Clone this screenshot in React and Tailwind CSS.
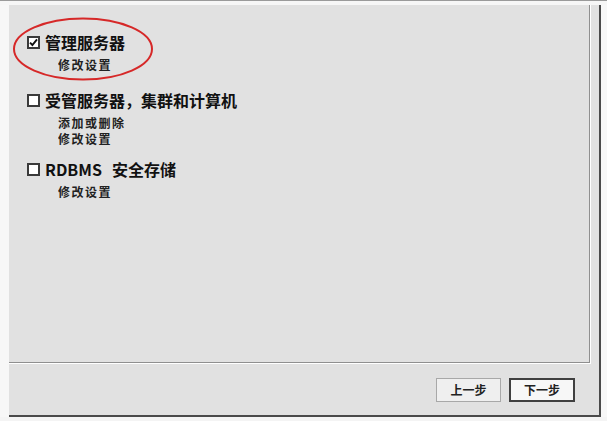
const CheckBox = ({ checked }) => (
  <span className="flex h-[13px] w-[13px] shrink-0 items-center justify-center border-2 border-[#3a3a3a] bg-white">
    {checked && (
      <svg width="9" height="9" viewBox="0 0 9 9">
        <path d="M1 4.6 L3.4 7 L8 1.4" fill="none" stroke="#111" strokeWidth="1.9" />
      </svg>
    )}
  </span>
);

const Option = ({ checked, label, subs, className }) => (
  <div className={className}>
    <div className="flex h-[22px] items-center gap-[5px] pl-[18px]">
      <CheckBox checked={checked} />
      <span className="text-[16px] font-bold leading-[22px] text-[#111]">{label}</span>
    </div>
    <div className="mt-[4px] pl-[49px]">
      {subs.map((s, i) => (
        <div key={i} className="h-[16px] overflow-hidden text-[12px] font-bold leading-[16px] tracking-[1.5px] text-[#222]">
          {s}
        </div>
      ))}
    </div>
  </div>
);

export default function App() {
  return (
    <div
      className="relative flex h-[421px] w-[607px] flex-col bg-white"
      style={{ fontFamily: '"Noto Sans CJK SC", "Liberation Sans", sans-serif' }}
    >
      <div className="h-[1px] bg-[#9a9a9a]" />
      <div className="h-[4px] bg-[#f6f6f6]" />
      <div className="flex h-[412px]">
        <div className="w-[9px] bg-[#f7f7f7]" />
        {/* frame */}
        <div className="flex w-[592px] flex-col border-b-2 border-r-2 border-[#4a4a4a] bg-[#e1e1e1]">
          {/* content */}
          <div className="flex h-[358px]">
            <div className="w-[581px] border-b border-r border-[#8f8f8f] pt-[26px]">
              <Option checked label="管理服务器" subs={['修改设置']} />
              <Option
                className="mt-[16px]"
                label="受管服务器，集群和计算机"
                subs={['添加或删除', '修改设置']}
              />
              <Option
                className="mt-[11px]"
                label={<>RDBMS<span className="ml-[10px]">安全存储</span></>}
                subs={['修改设置']}
              />
            </div>
            <div className="w-[1px] bg-white" />
          </div>
          <div className="h-[1px] w-[582px] bg-white" />
          <div className="flex flex-1 items-start justify-end gap-[8px] pr-[24px] pt-[14px]">
            <button className="flex h-[24px] w-[65px] items-center justify-center border border-[#a8a8a8] bg-[#efefef] text-[12px] font-bold text-[#222]">
              上一步
            </button>
            <button className="flex h-[24px] w-[66px] items-center justify-center border-2 border-[#404040] bg-[#f7f7f7] text-[12px] font-bold text-[#222]">
              下一步
            </button>
          </div>
        </div>
        <div className="flex-1 bg-[#f7f7f7]" />
      </div>
      <div className="flex-1 bg-[#f4f4f4]" />

      {/* red highlight ellipse drawn over the first option */}
      <svg className="pointer-events-none absolute left-0 top-0" width="607" height="421">
        <ellipse cx="83" cy="49" rx="69" ry="30.5" fill="none" stroke="#d62828" strokeWidth="2" />
      </svg>
    </div>
  );
}
